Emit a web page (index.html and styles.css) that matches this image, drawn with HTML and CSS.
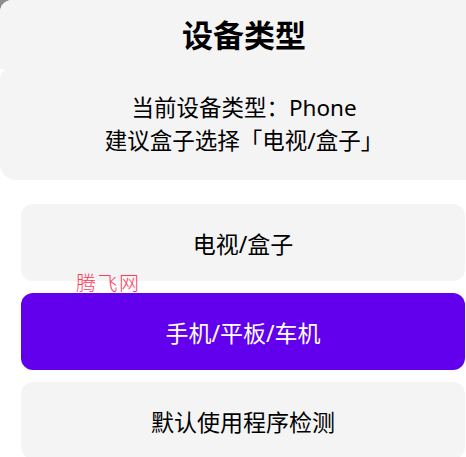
FILE: index.html
```html
<!DOCTYPE html>
<html lang="zh-CN">
<head>
<meta charset="utf-8">
<title>设备类型</title>
<link rel="stylesheet" href="styles.css">
</head>
<body>
<div class="dialog">
  <div class="title-card">
    <h1 class="title">设备类型</h1>
  </div>
  <div class="message-card">
    <p class="message">当前设备类型：Phone<br>建议盒子选择「电视/盒子」</p>
  </div>
  <div class="options">
    <div class="option">电视/盒子</div>
    <div class="option selected">手机/平板/车机<span class="watermark">腾飞网</span></div>
    <div class="option">默认使用程序检测</div>
  </div>
</div>
</body>
</html>
```
FILE: styles.css
```css
html, body {
  margin: 0;
  padding: 0;
}
body {
  background: #8c8c8c;
  width: 466px;
  height: 457px;
  overflow: hidden;
  font-family: "Noto Sans", "Noto Sans CJK SC", sans-serif;
  color: #000;
}
.dialog {
  width: 488px;
  height: 457px;
  background: #ffffff;
  border-top-left-radius: 12px;
  overflow: hidden;
  display: flex;
  flex-direction: column;
}
.title-card {
  flex: none;
  background: #f4f4f4;
  height: 69px;
  display: flex;
  align-items: center;
  justify-content: center;
}
.title {
  margin: 0;
  font-size: 31px;
  font-weight: 700;
  line-height: 1;
  color: #000;
  padding-top: 1px;
}
.message-card {
  flex: none;
  position: relative;
  background: #f4f4f4;
  margin-top: -3px;
  height: 114px;
  border-top-left-radius: 14px;
  border-bottom-left-radius: 16px;
  display: flex;
  align-items: center;
  justify-content: center;
}
.message {
  margin: 0;
  font-size: 22.5px;
  line-height: 33px;
  text-align: center;
  color: #000;
  padding-top: 2px;
}
.options {
  flex: none;
  display: flex;
  flex-direction: column;
  gap: 12px;
  padding: 24px 23px 0 21px;
}
.option {
  position: relative;
  flex: none;
  height: 77px;
  border-radius: 12px;
  background: #f4f4f4;
  display: flex;
  align-items: center;
  justify-content: center;
  font-size: 23px;
  color: #000;
}
.option.selected {
  background: #6200ee;
  color: #ffffff;
}
.watermark {
  position: absolute;
  left: 55px;
  top: -21px;
  font-size: 20px;
  line-height: 22px;
  font-weight: 300;
  color: #ff3b5c;
  letter-spacing: 1.5px;
  font-family: "Noto Sans CJK SC", sans-serif;
}
```
